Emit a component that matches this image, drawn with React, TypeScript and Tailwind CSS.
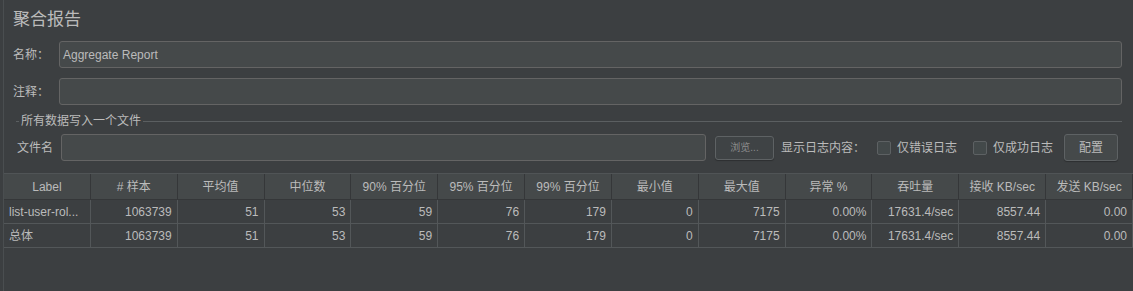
import React from "react";

const headers = ["Label", "# 样本", "平均值", "中位数", "90% 百分位", "95% 百分位", "99% 百分位", "最小值", "最大值", "异常 %", "吞吐量", "接收 KB/sec", "发送 KB/sec"];
const rows = [
  ["list-user-rol...", "1063739", "51", "53", "59", "76", "179", "0", "7175", "0.00%", "17631.4/sec", "8557.44", "0.00"],
  ["总体", "1063739", "51", "53", "59", "76", "179", "0", "7175", "0.00%", "17631.4/sec", "8557.44", "0.00"],
];

function Checkbox() {
  return <div className="w-[14px] h-[14px] border border-[#5d6163] rounded-[2px] bg-[#43494a]" />;
}

export default function App() {
  return (
    <div
      className="w-[1133px] h-[291px] bg-[#3c3f41] text-[#bbbbbb] overflow-hidden flex text-[12px]"
      style={{ fontFamily: '"Liberation Sans", "Noto Sans CJK SC", sans-serif' }}
    >
      <div className="w-[3px] shrink-0" />
      <div className="w-px shrink-0 bg-[#4a4e50]" />
      <div className="flex-1 flex flex-col min-w-0">
        <div className="h-[39px] pl-[9px] pt-[1px] flex items-center text-[17px] text-[#bbbbbb]">聚合报告</div>
        <div className="flex items-center h-[27px] mt-[2px]">
          <div className="w-[55px] pl-[9px] shrink-0">名称：</div>
          <div className="flex-1 mr-[11px] h-[27px] bg-[#45494a] border border-[#646464] rounded-[3px] flex items-center pl-[3px] text-[#bbbbbb]">
            Aggregate Report
          </div>
        </div>
        <div className="flex items-center h-[27px] mt-[10px]">
          <div className="w-[55px] pl-[9px] shrink-0">注释：</div>
          <div className="flex-1 mr-[11px] h-[27px] bg-[#45494a] border border-[#646464] rounded-[3px]" />
        </div>
        <div className="flex items-center h-[16px] mt-[8px] pl-[12px] pr-[11px]">
          <div className="w-[3px] h-px bg-[#5b5f61]" />
          <div className="px-[2px]">所有数据写入一个文件</div>
          <div className="flex-1 h-px bg-[#5b5f61]" />
        </div>
        <div className="flex items-center h-[27px] mt-[5px]">
          <div className="w-[57px] pl-[13px] shrink-0">文件名</div>
          <div className="w-[645px] h-[27px] bg-[#45494a] border border-[#646464] rounded-[3px] shrink-0" />
          <div className="ml-[9px] w-[59px] h-[24px] bg-[#3f4345] border border-[#5e6264] rounded-[3px] flex items-center justify-center text-[10px] text-[#8c8c8c] shadow-[0_1px_1px_rgba(0,0,0,0.25)]">
            浏览...
          </div>
          <div className="ml-[7px]">显示日志内容：</div>
          <div className="ml-[12px]"><Checkbox /></div>
          <div className="ml-[6px]">仅错误日志</div>
          <div className="ml-[16px]"><Checkbox /></div>
          <div className="ml-[6px]">仅成功日志</div>
          <div className="ml-[11px] w-[54px] h-[27px] bg-[#45494a] border border-[#5e6264] rounded-[3px] flex items-center justify-center shadow-[0_1px_1px_rgba(0,0,0,0.25)]">
            配置
          </div>
        </div>
        <div className="mt-[12px] grid grid-cols-[repeat(13,minmax(0,1fr))] border-t border-[#505456]">
          {headers.map((h, i) => (
            <div key={i} className="h-[26px] bg-[#45494a] border-r border-b border-[#353739] flex items-center justify-center whitespace-nowrap">
              {h}
            </div>
          ))}
          {rows.map((r, ri) =>
            r.map((c, ci) => (
              <div
                key={`${ri}-${ci}`}
                className={`h-[24px] border-r border-b border-[#535759] flex items-center whitespace-nowrap overflow-hidden ${ci === 0 ? "justify-start pl-[5px]" : "justify-end pr-[5px]"}`}
              >
                {c}
              </div>
            ))
          )}
        </div>
      </div>
    </div>
  );
}
